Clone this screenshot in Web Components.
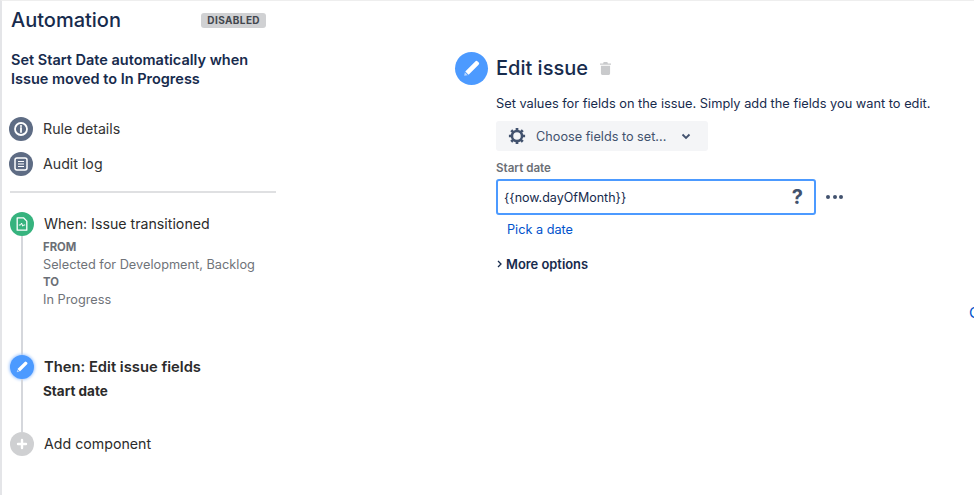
<!DOCTYPE html>
<html>
<head>
<meta charset="utf-8">
<title>Automation</title>
<style>
html, body { margin: 0; height: 100%; }
body { font-family: Inter, "Liberation Sans", sans-serif; color: #172b4d; background: #fff; overflow: hidden; }
</style>
</head>
<body>
<rule-page>
  <rule-sidebar slot="side"></rule-sidebar>
  <edit-panel slot="main"></edit-panel>
</rule-page>

<script>
const PENCIL = `<svg viewBox="0 0 24 24" width="100%" height="100%"><path fill="#fff" d="M15.6 5.2a1.6 1.6 0 0 1 2.3 0l.9.9a1.6 1.6 0 0 1 0 2.3L9.2 18l-3.2-3.2z"/><path fill="#fff" opacity=".6" d="M5.6 15.6l2.8 2.8-3.4.6z"/></svg>`;

class RulePage extends HTMLElement {
    constructor() {
        super();
        this.attachShadow({mode: "open"});
        this.shadowRoot.innerHTML = `
            <style>
                :host {
                    display: flex;
                    box-sizing: border-box;
                    position: relative;
                    width: 974px;
                    height: 495px;
                    overflow: hidden;
                    border-top: 1px solid #eeeeee;
                    border-left: 2px solid #e4e5e8;
                }
                .cut {
                    position: absolute;
                    left: 967px;
                    top: 302px;
                    font-size: 15px;
                    line-height: 20px;
                    color: #0052cc;
                }
            </style>
            <slot name="side"></slot>
            <slot name="main"></slot>
            <span class="cut">C</span>
        `;
    }
}

class NavItem extends HTMLElement {
    constructor() {
        super();
        this.attachShadow({mode: "open"});
        this.shadowRoot.innerHTML = `
            <style>
                :host {
                    display: flex;
                    align-items: center;
                    gap: 10px;
                    height: 35px;
                    font-size: 14.2px;
                    color: #333;
                }
                .icon {
                    width: 24px;
                    height: 24px;
                    flex: none;
                    border-radius: 50%;
                    background: #5e6c84;
                    margin-left: -1px;
                }
                svg { display: block; }
            </style>
            <span class="icon"><slot name="icon"></slot></span>
            <span><slot></slot></span>
        `;
    }
}

class FlowStep extends HTMLElement {
    constructor() {
        super();
        this.attachShadow({mode: "open"});
        this.shadowRoot.innerHTML = `
            <style>
                :host {
                    display: flex;
                    gap: 10px;
                    height: var(--step-height, auto);
                }
                .rail {
                    display: flex;
                    flex-direction: column;
                    align-items: center;
                    width: 24px;
                    flex: none;
                }
                .dot {
                    width: 24px;
                    height: 24px;
                    flex: none;
                    border-radius: 50%;
                    background: var(--dot, #36b37e);
                    box-shadow: var(--dot-glow, none);
                }
                .line {
                    flex: 1;
                    width: 2px;
                    background: #d5d7dc;
                }
                .title {
                    font-size: var(--title-size, 14.2px);
                    line-height: 24px;
                    color: #2b2b2b;
                    font-weight: var(--title-weight, 400);
                }
                .body { margin-left: -1px; margin-top: 3px; }
            </style>
            <div class="rail">
                <span class="dot"><slot name="icon"></slot></span>
                <span class="line"></span>
            </div>
            <div>
                <div class="title"><slot name="title"></slot></div>
                <div class="body"><slot></slot></div>
            </div>
        `;
    }
}

class RuleSidebar extends HTMLElement {
    constructor() {
        super();
        this.attachShadow({mode: "open"});
        this.shadowRoot.innerHTML = `
            <style>
                :host {
                    display: block;
                    box-sizing: border-box;
                    width: 274px;
                    flex: none;
                    padding-left: 8px;
                }
                header {
                    display: flex;
                    justify-content: space-between;
                    align-items: center;
                    height: 38px;
                    padding-right: 10px;
                }
                h1 {
                    margin: 0 0 0 1px;
                    font-size: 20px;
                    font-weight: 500;
                    color: #172b4d;
                }
                .badge {
                    background: #d0d1d3;
                    color: #42464d;
                    font-size: 10px;
                    font-weight: 700;
                    letter-spacing: 0.4px;
                    line-height: 15px;
                    padding: 0 6px;
                    border-radius: 3px;
                }
                h2 {
                    margin: 11px 0 0 1px;
                    font-size: 14.5px;
                    line-height: 19px;
                    font-weight: 600;
                    color: #172b4d;
                }
                nav { margin-top: 23px; }
                hr {
                    border: 0;
                    height: 2px;
                    background: #dfe0e2;
                    margin: 10px 0 19px;
                }
                .label { font-size: 11.3px; line-height: 16px; font-weight: 700; color: #6b6f76; }
                .value { font-size: 12.75px; line-height: 19px; color: #6f7379; }
                .strong { font-size: 13.5px; line-height: 20px; font-weight: 700; color: #2b2b2b; margin-top: -1px; }
                .s1 { --step-height: 143px; }
                .s2 { --step-height: 77px; --dot: #4c9aff; --dot-glow: 0 0 3px 1px #a9ccff; --title-weight: 600; --title-size: 14.75px; }
                .s3 { --step-height: 24px; --dot: #cfd0d2; }
                .pen { display: block; box-sizing: border-box; width: 24px; height: 24px; padding: 3px; }
                svg { display: block; }
            </style>
            <header>
                <h1>Automation</h1>
                <span class="badge">DISABLED</span>
            </header>
            <h2>Set Start Date automatically when<br>Issue moved to In Progress</h2>
            <nav>
                <nav-item>
                    <svg slot="icon" viewBox="0 0 24 24" width="24" height="24">
                        <circle cx="12" cy="12" r="6" fill="none" stroke="#fff" stroke-width="1.8"/>
                        <path d="M12 11v4" stroke="#fff" stroke-width="1.8" stroke-linecap="round"/>
                        <circle cx="12" cy="8.9" r="1" fill="#fff"/>
                    </svg>
                    Rule details
                </nav-item>
                <nav-item>
                    <svg slot="icon" viewBox="0 0 24 24" width="24" height="24">
                        <rect x="6" y="6" width="12" height="12" rx="2" fill="none" stroke="#fff" stroke-width="1.5"/>
                        <path d="M9 9.5h6M9 12h6M9 14.5h6" stroke="#fff" stroke-width="1.2"/>
                    </svg>
                    Audit log
                </nav-item>
            </nav>
            <hr>
            <flow-step class="s1">
                <svg slot="icon" viewBox="0 0 24 24" width="24" height="24">
                    <path d="M7.2 5.8h6.3l3.3 3.3v9.1H7.2z" fill="none" stroke="#fff" stroke-width="1.3" stroke-linejoin="round"/>
                    <path d="M8.8 13h1.8l1-2 1.1 3.2 .9-1.2h1.6" fill="none" stroke="#fff" stroke-width="1"/>
                </svg>
                <span slot="title">When: Issue transitioned</span>
                <div class="label">FROM</div>
                <div class="value">Selected for Development, Backlog</div>
                <div class="label">TO</div>
                <div class="value">In Progress</div>
            </flow-step>
            <flow-step class="s2">
                <span slot="icon" class="pen">${PENCIL}</span>
                <span slot="title">Then: Edit issue fields</span>
                <div class="strong">Start date</div>
            </flow-step>
            <flow-step class="s3">
                <svg slot="icon" viewBox="0 0 24 24" width="24" height="24">
                    <path d="M12 8v8M8 12h8" stroke="#fff" stroke-width="2.4" stroke-linecap="round"/>
                </svg>
                <span slot="title">Add component</span>
            </flow-step>
        `;
    }
}

class EditPanel extends HTMLElement {
    constructor() {
        super();
        this.attachShadow({mode: "open"});
        this.shadowRoot.innerHTML = `
            <style>
                :host {
                    display: block;
                    margin-left: 179px;
                    padding-top: 50px;
                    width: 490px;
                }
                .head {
                    display: flex;
                    align-items: center;
                    height: 34px;
                }
                .round {
                    box-sizing: border-box;
                    width: 33px;
                    height: 33px;
                    padding: 4px;
                    border-radius: 50%;
                    background: #4c9aff;
                    margin-right: 8px;
                    flex: none;
                }
                h1 {
                    margin: 0;
                    font-size: 20px;
                    font-weight: 500;
                    color: #172b4d;
                }
                .trash { margin-left: 12px; display: block; }
                .content { margin-left: 41px; }
                p {
                    margin: 9px 0 0;
                    font-size: 12.8px;
                    line-height: 20px;
                    color: #172b4d;
                    white-space: nowrap;
                }
                .picker {
                    display: flex;
                    align-items: center;
                    width: 212px;
                    height: 30px;
                    margin-top: 7px;
                    background: #f4f5f7;
                    border-radius: 3px;
                    color: #42526e;
                    font-size: 12.7px;
                    box-sizing: border-box;
                    padding-left: 12px;
                    white-space: nowrap;
                }
                .picker span { margin-left: 10px; }
                .picker .chev { margin-left: 14px; }
                label {
                    display: block;
                    margin-top: 10px;
                    font-size: 11.6px;
                    line-height: 14px;
                    font-weight: 600;
                    color: #6b6f76;
                }
                .row { display: flex; align-items: center; margin-top: 4px; }
                .field {
                    display: flex;
                    align-items: center;
                    justify-content: space-between;
                    box-sizing: border-box;
                    width: 320px;
                    height: 36px;
                    border: 2px solid #4c9aff;
                    border-radius: 3px;
                    padding: 0 11px 0 6px;
                    font-size: 12.5px;
                    color: #172b4d;
                }
                .help { font-size: 20px; font-weight: 700; color: #42526e; }
                .dots { display: flex; gap: 2.5px; margin-left: 10px; }
                .dots i { width: 4px; height: 4px; border-radius: 50%; background: #42526e; }
                a {
                    display: block;
                    margin: 5px 0 0 11px;
                    font-size: 12.7px;
                    line-height: 20px;
                    color: #0052cc;
                    text-decoration: none;
                }
                .more {
                    display: flex;
                    align-items: center;
                    margin-top: 15px;
                    font-size: 12.9px;
                    line-height: 20px;
                    font-weight: 600;
                    color: #172b4d;
                }
                .more svg { margin-top: -3px; }
                svg { display: block; }
            </style>
            <div class="head">
                <span class="round">${PENCIL}</span>
                <h1>Edit issue</h1>
                <svg class="trash" viewBox="0 0 12 14" width="11" height="13">
                    <path fill="#c9cacc" d="M4 0h4l.6 1.5H12V3H0V1.5h3.4zM1 4h10v8.5A1.5 1.5 0 0 1 9.5 14h-7A1.5 1.5 0 0 1 1 12.5z"/>
                </svg>
            </div>
            <div class="content">
                <p>Set values for fields on the issue. Simply add the fields you want to edit.</p>
                <div class="picker">
                    <svg viewBox="0 0 20 20" width="18" height="18">
                        <circle cx="10" cy="10" r="5.6" fill="none" stroke="#42526e" stroke-width="2.8"/>
                        <path stroke="#42526e" stroke-width="3" d="M10 1v3M10 16v3M1 10h3M16 10h3M3.6 3.6l2.1 2.1M14.3 14.3l2.1 2.1M3.6 16.4l2.1-2.1M14.3 5.7l2.1-2.1"/>
                    </svg>
                    <span>Choose fields to set...</span>
                    <svg class="chev" viewBox="0 0 12 12" width="12" height="12">
                        <path d="M2.5 4.5 6 8l3.5-3.5" fill="none" stroke="#42526e" stroke-width="1.8"/>
                    </svg>
                </div>
                <label>Start date</label>
                <div class="row">
                    <div class="field">
                        <span>{{now.dayOfMonth}}</span>
                        <span class="help">?</span>
                    </div>
                    <div class="dots"><i></i><i></i><i></i></div>
                </div>
                <a>Pick a date</a>
                <div class="more">
                    <svg viewBox="0 0 10 10" width="10" height="10">
                        <path d="M2 2l3 3-3 3" fill="none" stroke="#172b4d" stroke-width="1.3"/>
                    </svg>
                    More options
                </div>
            </div>
        `;
    }
}

customElements.define('nav-item', NavItem);
customElements.define('flow-step', FlowStep);
customElements.define('rule-sidebar', RuleSidebar);
customElements.define('edit-panel', EditPanel);
customElements.define('rule-page', RulePage);
</script>
</body>
</html>
